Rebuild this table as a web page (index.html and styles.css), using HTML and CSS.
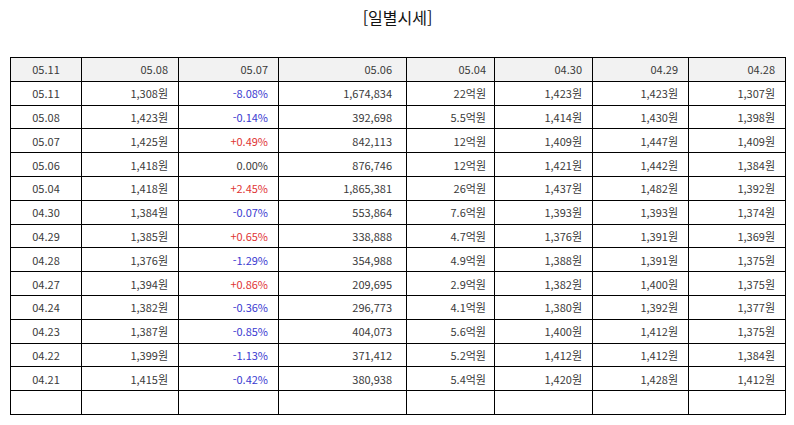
FILE: index.html
```html
<!DOCTYPE html>
<html lang="ko">
<head>
<meta charset="utf-8">
<link rel="stylesheet" href="styles.css">
</head>
<body>
<div class="wrap">
  <h2 class="title">[일별시세]</h2>
  <table class="grid">
    <colgroup>
      <col class="c1"><col class="c2"><col class="c3"><col class="c4"><col class="c5"><col class="c6"><col class="c7"><col class="c8">
    </colgroup>
    <thead>
      <tr><th>05.11</th><th>05.08</th><th>05.07</th><th>05.06</th><th>05.04</th><th>04.30</th><th>04.29</th><th>04.28</th></tr>
    </thead>
    <tbody>
      <tr><td>05.11</td><td>1,308원</td><td class="dn">-8.08%</td><td>1,674,834</td><td>22억원</td><td>1,423원</td><td>1,423원</td><td>1,307원</td></tr>
      <tr><td>05.08</td><td>1,423원</td><td class="dn">-0.14%</td><td>392,698</td><td>5.5억원</td><td>1,414원</td><td>1,430원</td><td>1,398원</td></tr>
      <tr><td>05.07</td><td>1,425원</td><td class="up">+0.49%</td><td>842,113</td><td>12억원</td><td>1,409원</td><td>1,447원</td><td>1,409원</td></tr>
      <tr><td>05.06</td><td>1,418원</td><td>0.00%</td><td>876,746</td><td>12억원</td><td>1,421원</td><td>1,442원</td><td>1,384원</td></tr>
      <tr><td>05.04</td><td>1,418원</td><td class="up">+2.45%</td><td>1,865,381</td><td>26억원</td><td>1,437원</td><td>1,482원</td><td>1,392원</td></tr>
      <tr><td>04.30</td><td>1,384원</td><td class="dn">-0.07%</td><td>553,864</td><td>7.6억원</td><td>1,393원</td><td>1,393원</td><td>1,374원</td></tr>
      <tr><td>04.29</td><td>1,385원</td><td class="up">+0.65%</td><td>338,888</td><td>4.7억원</td><td>1,376원</td><td>1,391원</td><td>1,369원</td></tr>
      <tr><td>04.28</td><td>1,376원</td><td class="dn">-1.29%</td><td>354,988</td><td>4.9억원</td><td>1,388원</td><td>1,391원</td><td>1,375원</td></tr>
      <tr><td>04.27</td><td>1,394원</td><td class="up">+0.86%</td><td>209,695</td><td>2.9억원</td><td>1,382원</td><td>1,400원</td><td>1,375원</td></tr>
      <tr><td>04.24</td><td>1,382원</td><td class="dn">-0.36%</td><td>296,773</td><td>4.1억원</td><td>1,380원</td><td>1,392원</td><td>1,377원</td></tr>
      <tr><td>04.23</td><td>1,387원</td><td class="dn">-0.85%</td><td>404,073</td><td>5.6억원</td><td>1,400원</td><td>1,412원</td><td>1,375원</td></tr>
      <tr><td>04.22</td><td>1,399원</td><td class="dn">-1.13%</td><td>371,412</td><td>5.2억원</td><td>1,412원</td><td>1,412원</td><td>1,384원</td></tr>
      <tr><td>04.21</td><td>1,415원</td><td class="dn">-0.42%</td><td>380,938</td><td>5.4억원</td><td>1,420원</td><td>1,428원</td><td>1,412원</td></tr>
      <tr class="empty"><td></td><td></td><td></td><td></td><td></td><td></td><td></td><td></td></tr>
    </tbody>
  </table>
</div>
</body>
</html>
```
FILE: styles.css
```css
html, body {
  margin: 0;
  padding: 0;
  background: #fff;
}
body {
  font-family: "Noto Sans CJK KR", "Noto Sans", sans-serif;
  color: #3a3a3a;
}
.wrap {
  padding: 6px 9px 0 10px;
}
.title {
  margin: 0 0 29px 0;
  font-size: 16px;
  font-weight: normal;
  text-align: center;
  line-height: 22px;
  color: #111;
}
.grid {
  border-collapse: collapse;
  width: 775px;
  table-layout: fixed;
  font-size: 11px;
}
.c1 { width: 71px; }
.c2 { width: 97px; }
.c3 { width: 100px; }
.c4 { width: 128px; }
.c5 { width: 88px; }
.c6 { width: 98px; }
.c7 { width: 96px; }
.c8 { width: 97px; }
.grid th, .grid td {
  border: 1px solid #000;
  height: 23.8px;
  padding: 0 10px 0 4px;
  text-align: right;
  font-weight: normal;
  line-height: 14px;
  box-sizing: border-box;
  white-space: nowrap;
}
.grid th {
  background: #f2f2f2;
}
.grid th:nth-child(4), .grid td:nth-child(4) { padding-right: 14px; }
.grid th:nth-child(5), .grid td:nth-child(5) { padding-right: 8px; }
.grid th:first-child, .grid td:first-child {
  text-align: center;
  padding: 0;
}
.dn { color: #3a3ad0; }
.up { color: #e03434; }
```
